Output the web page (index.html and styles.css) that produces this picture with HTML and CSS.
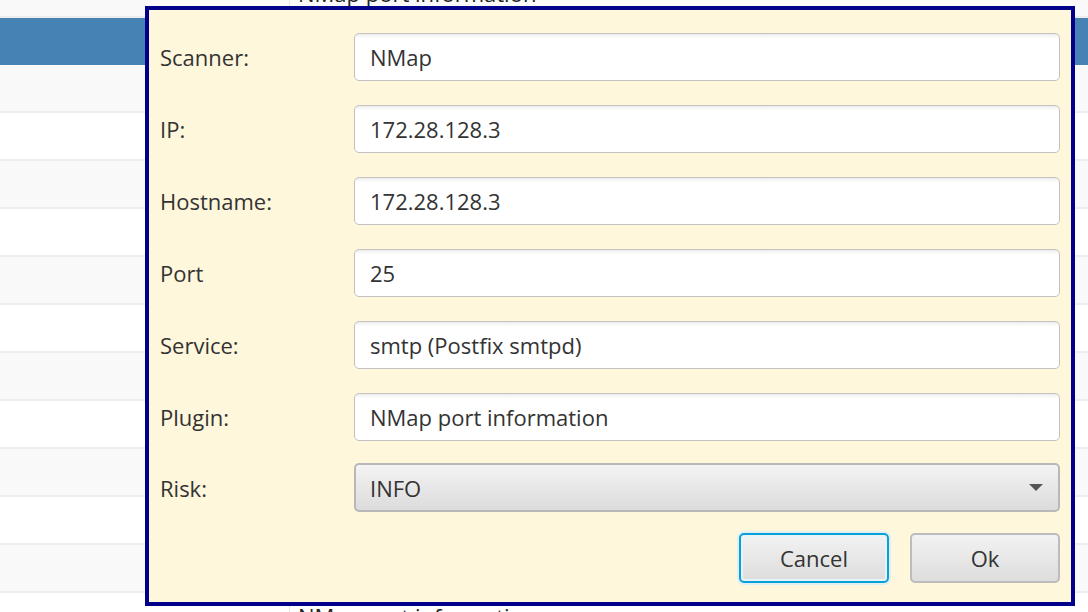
FILE: index.html
```html
<!DOCTYPE html>
<html>
<head>
<meta charset="utf-8">
<link rel="stylesheet" href="styles.css">
</head>
<body>
<div class="table">
  <div class="row row-top"><div class="cell c1"></div><div class="cell c2">NMap port information</div></div>
  <div class="header"></div>
  <div class="row odd"><div class="cell c1"></div><div class="cell c2"></div></div>
  <div class="row"><div class="cell c1"></div><div class="cell c2"></div></div>
  <div class="row odd"><div class="cell c1"></div><div class="cell c2"></div></div>
  <div class="row"><div class="cell c1"></div><div class="cell c2"></div></div>
  <div class="row odd"><div class="cell c1"></div><div class="cell c2"></div></div>
  <div class="row"><div class="cell c1"></div><div class="cell c2"></div></div>
  <div class="row odd"><div class="cell c1"></div><div class="cell c2"></div></div>
  <div class="row"><div class="cell c1"></div><div class="cell c2"></div></div>
  <div class="row odd"><div class="cell c1"></div><div class="cell c2"></div></div>
  <div class="row"><div class="cell c1"></div><div class="cell c2"></div></div>
  <div class="row odd"><div class="cell c1"></div><div class="cell c2"></div></div>
  <div class="row"><div class="cell c1"></div><div class="cell c2">NMap port information</div></div>
</div>

<div class="dialog">
  <div class="form">
    <div class="label">Scanner:</div><div class="field">NMap</div>
    <div class="label">IP:</div><div class="field">172.28.128.3</div>
    <div class="label">Hostname:</div><div class="field">172.28.128.3</div>
    <div class="label">Port</div><div class="field">25</div>
    <div class="label">Service:</div><div class="field">smtp (Postfix smtpd)</div>
    <div class="label">Plugin:</div><div class="field">NMap port information</div>
    <div class="label risk-label">Risk:</div>
    <div class="combo"><span>INFO</span><span class="arrow"></span></div>
  </div>
  <div class="buttons">
    <div class="btn focused">Cancel</div>
    <div class="btn">Ok</div>
  </div>
</div>
</body>
</html>
```

FILE: styles.css
```css
html, body {
  margin: 0;
  padding: 0;
}
body {
  width: 1088px;
  height: 612px;
  overflow: hidden;
  position: relative;
  background: #ffffff;
  font-family: "Open Sans", "Noto Sans", sans-serif;
  font-size: 22px;
  color: #333333;
}
.table {
  display: flex;
  flex-direction: column;
}
.row {
  display: flex;
  height: 46px;
  flex: none;
  border-bottom: 2px solid #ededed;
  background: #ffffff;
}
.row.odd {
  background: #f9f9f9;
}
.row-top {
  margin-top: -30px;
  background: #f9f9f9;
}
.cell {
  display: flex;
  align-items: center;
  color: #222222;
}
.c1 {
  width: 290px;
  border-right: 1px solid #e6e6e6;
  box-sizing: border-box;
}
.c2 {
  padding-left: 8px;
}
.header {
  height: 47px;
  flex: none;
  background: #4682b4;
}

.dialog {
  position: absolute;
  left: 145px;
  top: 6px;
  width: 930px;
  height: 600px;
  box-sizing: border-box;
  border: 4px solid #00008b;
  background: #fff7dc;
  padding: 23px 11px 0 11px;
  display: flex;
  flex-direction: column;
}
.form {
  display: grid;
  grid-template-columns: 194px 1fr;
  grid-auto-rows: 48px;
  row-gap: 24px;
  align-items: center;
}
.label {
  padding-left: 0px;
  line-height: 48px;
}
.field {
  height: 48px;
  box-sizing: border-box;
  border: 1px solid #c2c2c2;
  border-radius: 5px;
  background: linear-gradient(#ececec 0px, #ffffff 4px, #ffffff 100%);
  padding-left: 15px;
  display: flex;
  align-items: center;
  color: #333333;
}
.risk-label {
  margin-top: -3px;
}
.combo {
  margin-top: -3px;
  height: 49px;
  box-sizing: border-box;
  border: 2px solid #b8b8b8;
  border-radius: 5px;
  background: linear-gradient(#f3f3f3, #dcdcdc);
  padding: 0 15px 0 14px;
  display: flex;
  align-items: center;
  justify-content: space-between;
  color: #333333;
}
.arrow {
  width: 0;
  height: 0;
  border-left: 7px solid transparent;
  border-right: 7px solid transparent;
  border-top: 7px solid #555555;
}
.buttons {
  display: flex;
  justify-content: flex-end;
  gap: 21px;
  margin-top: 20px;
}
.btn {
  width: 150px;
  height: 50px;
  box-sizing: border-box;
  border: 2px solid #bcbcbc;
  border-radius: 5px;
  background: linear-gradient(#f2f2f2, #dddddd);
  display: flex;
  align-items: center;
  justify-content: center;
  color: #333333;
}
.btn.focused {
  border-color: #0a9fd6;
  box-shadow: 0 0 0 2px #dff0f5, inset 0 0 0 2px #e6f3f8;
}
```
